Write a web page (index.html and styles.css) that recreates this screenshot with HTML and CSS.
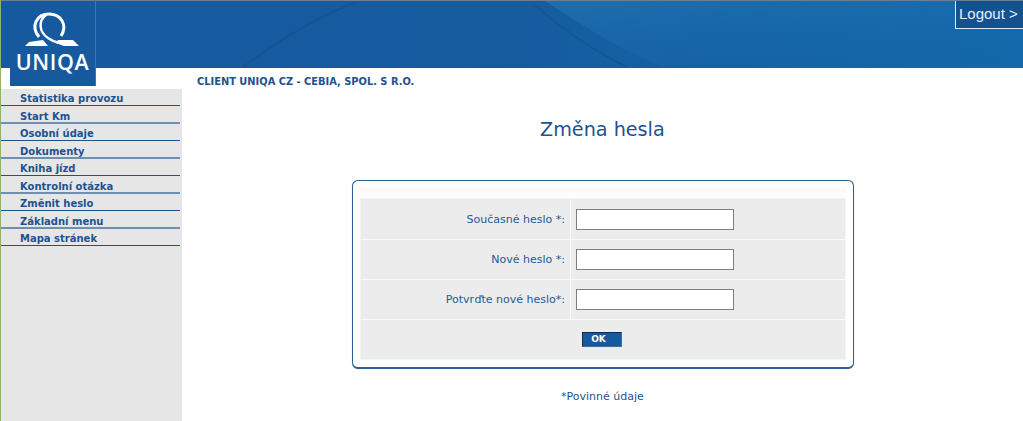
FILE: index.html
```html
<!DOCTYPE html>
<html lang="cs">
<head>
<meta charset="utf-8">
<title>Změna hesla</title>
<link rel="stylesheet" href="styles.css">
</head>
<body>
<header class="banner">
  <svg class="swoosh" viewBox="0 0 1023 68" preserveAspectRatio="none" aria-hidden="true">
    <defs>
      <linearGradient id="glow" x1="0" y1="0" x2="1" y2="1">
        <stop offset="0" stop-color="#2a82bd" stop-opacity=".45"/>
        <stop offset="1" stop-color="#1369ab" stop-opacity="0"/>
      </linearGradient>
    </defs>
    <path class="sw-light" d="M545 0C590 30 630 55 665 67L1023 67L1023 0Z" />
    <path class="sw-dark" d="M243 67C285 35 325 13 357 1" />
    <path class="sw-dark" d="M533 3C565 30 595 52 627 67" />
  </svg>
  <a class="logout" href="#">Logout &gt;</a>
</header>
<a class="logo" href="#">
  <svg class="logo-mark" viewBox="0 0 85 50" aria-hidden="true">
    <path class="lm" d="M29 36C20 25 27 13 39 13C51 13 58 24 51 35" />
    <path class="lm thin" d="M36 14C28 20 29 31 38 37C45 42 52 43 60 43" />
    <path class="lm-bar" d="M15 45L19 41L33 39L38 45Z" />
    <path class="lm-bar" d="M46 42L48 39L63 39L69 45L54 45Z" />
  </svg>
  <span class="logo-text">UNIQA</span>
</a>
<div class="page">
  <nav class="side">
    <a href="#">Statistika provozu</a>
    <a href="#">Start Km</a>
    <a href="#">Osobní údaje</a>
    <a href="#">Dokumenty</a>
    <a href="#">Kniha jízd</a>
    <a href="#">Kontrolní otázka</a>
    <a href="#">Změnit heslo</a>
    <a href="#">Základní menu</a>
    <a href="#">Mapa stránek</a>
  </nav>
  <main class="content">
    <div class="client">CLIENT UNIQA CZ - CEBIA, SPOL. S R.O.</div>
    <h1 class="title">Změna hesla</h1>
    <form class="panel">
      <div class="band"></div>
      <div class="grid">
        <label class="lab" for="a">Současné heslo *:</label>
        <div class="val"><input id="a" type="password"></div>
        <label class="lab" for="b">Nové heslo *:</label>
        <div class="val"><input id="b" type="password"></div>
        <label class="lab" for="c">Potvrďte nové heslo*:</label>
        <div class="val"><input id="c" type="password"></div>
        <div class="actions"><button type="button" class="ok">OK</button></div>
      </div>
    </form>
    <p class="note">*Povinné údaje</p>
  </main>
</div>
</body>
</html>
```
FILE: styles.css
```css
* { box-sizing: border-box; }
html, body { margin: 0; height: 100%; }
body {
  background: #fff;
  font-family: "DejaVu Sans", Verdana, sans-serif;
  color: #1d5290;
  overflow: hidden;
  border-left: 1px solid #8fb36a;
}
.banner {
  height: 68px;
  margin-left: -1px;
  background: linear-gradient(90deg, #17599f 0%, #155c9f 50%, #1369ab 100%);
  border-top: 1px solid #6d7f90;
  display: flex;
  justify-content: flex-end;
  align-items: flex-start;
  position: relative;
}
.swoosh { position: absolute; inset: 0; width: 100%; height: 100%; }
.sw-dark { fill: none; stroke: #14528f; stroke-width: 1.5; opacity: .8; }
.sw-light { fill: url(#glow); }
.logout {
  position: relative;
  width: 68px;
  height: 28px;
  border-left: 1px solid #dfeaf3;
  border-bottom: 1px solid #dfeaf3;
  background: #14528f;
  color: #e6eff7;
  font: 15px "Liberation Sans", Arial, sans-serif;
  text-decoration: none;
  padding: 4px 0 0 3px;
  white-space: nowrap;
}
.logo {
  position: absolute;
  left: 10px;
  top: 1px;
  width: 86px;
  height: 85px;
  background: #17599f;
  border-right: 1px solid #3b76b0;
  display: flex;
  flex-direction: column;
  align-items: center;
  text-decoration: none;
}
.logo-mark { width: 85px; height: 50px; display: block; flex: none; }
.lm { fill: none; stroke: #fff; stroke-width: 3; }
.lm.thin { stroke-width: 2.4; }
.lm-bar { fill: #fff; }
.logo-text {
  color: #fff;
  font: 600 21.5px/22px "Open Sans", "Liberation Sans", sans-serif;
  letter-spacing: .6px;
}
.page { display: flex; height: 353px; }
.side {
  width: 181px;
  margin-top: 20.5px;
  background: #e6e6e6;
  flex: none;
  display: flex;
  flex-direction: column;
}
.side a {
  height: 17.5px;
  width: 179px;
  border-bottom: 1px solid #1d5290;
  padding: 1.5px 0 0 19px;
  font-size: 10px;
  line-height: 18px;
  font-weight: 700;
  color: #1d5290;
  text-decoration: none;
  white-space: nowrap;
}
.side a:nth-child(even) { border-bottom: 2px solid #6f8fb0; }
.content { flex: 1; display: flex; flex-direction: column; align-items: flex-start; }
.client {
  font-size: 9.87px;
  font-weight: 700;
  margin: 8px 0 0 15px;
  line-height: 12px;
  white-space: nowrap;
}
.title {
  font-size: 19.2px;
  font-weight: 400;
  line-height: 24px;
  margin: 30px 0 0 358px;
  color: #1d5290;
}
.panel {
  width: 502px;
  height: 189px;
  margin: 38px 0 0 170px;
  border: 1px solid #2d5f8f;
  border-bottom-width: 2px;
  border-radius: 6px;
  padding: 7px;
  background: #fff;
  box-shadow: 0 0 1px #9fb6cc;
}
.band { height: 10px; background: linear-gradient(#fdf7f7, #fff); }
.grid {
  display: grid;
  grid-template-columns: 210px 1fr;
  grid-template-rows: 41px 40px 40px 1fr;
  background: #ececec;
  border: 1px solid #f4f4f4;
  height: 162px;
}
.lab, .val, .actions { display: flex; align-items: center; border-bottom: 1px solid #fafafa; }
.lab {
  justify-content: flex-end;
  padding-right: 5px;
  font-size: 11px;
  color: #245a94;
  border-right: 1px solid #fafafa;
  white-space: nowrap;
}
.val { padding-left: 5px; }
.val input {
  width: 158px;
  height: 21px;
  background: #fff;
  border: 1px solid #7f7f7f;
  padding: 0;
  margin: 0;
  display: block;
}
.actions { grid-column: 1 / -1; padding-left: 221px; border-bottom: 0; }
.ok {
  width: 40px;
  height: 15px;
  background: #17599f;
  border: 1px solid #0f2f52;
  border-right-color: #3a6d9f;
  border-bottom-color: #3a6d9f;
  color: #fff;
  font: 700 9px/13px "DejaVu Sans", Verdana, sans-serif;
  padding: 0 7px 0 0;
  display: block;
}
.note {
  margin: 21px 0 0 379px;
  font-size: 11px;
  line-height: 13px;
  white-space: nowrap;
}
```
